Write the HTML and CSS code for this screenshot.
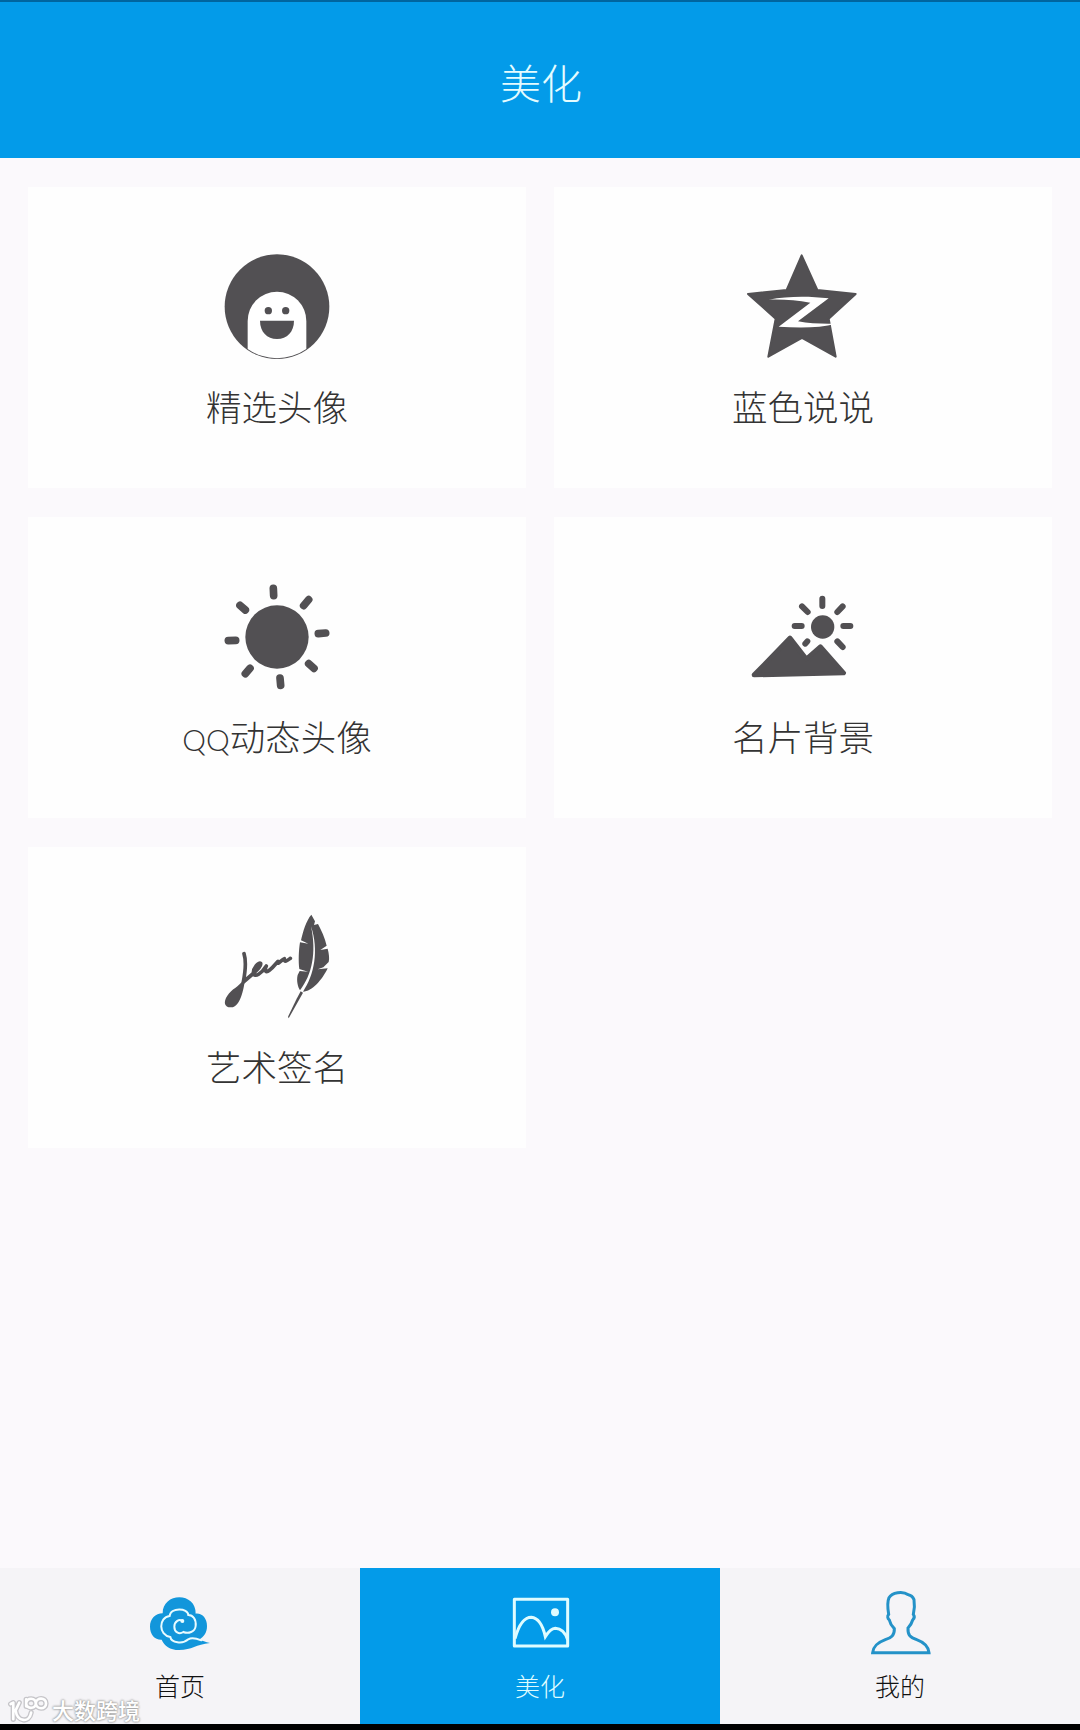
FILE: index.html
```html
<!DOCTYPE html>
<html lang="zh-CN">
<head>
    <meta charset="UTF-8">
    <meta name="viewport" content="width=device-width, initial-scale=1.0">
    <title>美化</title>
    <link rel="stylesheet" href="styles.css">
</head>
<body>
    <div class="app">
        <header class="header">
            <h1>美化</h1>
        </header>

        <main class="card-grid">
            <a class="card">
                <svg class="card-icon" viewBox="90 30 342 342">
                    <circle cx="261" cy="200" r="157" fill="#525053"/>
                    <path d="M173 327V243A88 88 0 0 1 349 243V327A154 154 0 0 1 173 327Z" fill="#fff"/>
                    <circle cx="235" cy="212" r="11" fill="#525053"/>
                    <circle cx="287" cy="212" r="11" fill="#525053"/>
                    <path d="M210 242H312C312 275 291 297 261 297S210 275 210 242Z" fill="#525053"/>
                </svg>
                <span class="card-label">精选头像</span>
            </a>
            <a class="card">
                <svg class="card-icon" viewBox="108 30 342 342">
                    <path d="M275 46L322 150L437 162L356 236L377 350L276 294L175 350L197 236L114 162L230 150Z" fill="#525053" stroke="#525053" stroke-width="6" stroke-linejoin="round"/>
                    <path d="M176 179C235 168 295 168 356 175L264 244C300 251 340 252 378 251C330 264 270 264 206 260L301 188C260 180 220 178 176 179Z" fill="#fff"/>
                </svg>
                <span class="card-label">蓝色说说</span>
            </a>
            <a class="card">
                <svg class="card-icon" viewBox="150 30 342 342">
                    <circle cx="321" cy="201" r="95" fill="#525053"/>
                    <path d="M310 55L311 77M416 89L401 107M445 191L467 189M416 281L432 295M330 324L332 346M240 295L226 311M197 211L175 212M226 120L210 106" fill="none" stroke="#525053" stroke-width="23" stroke-linecap="round"/>
                </svg>
                <span class="card-label"><span class="latin">QQ</span>动态头像</span>
            </a>
            <a class="card">
                <svg class="card-icon" viewBox="108 30 342 342">
                    <path d="M132 315L240 204L289 267L331 230L401 309Z" fill="#525053" stroke="#525053" stroke-width="14" stroke-linejoin="round"/>
                    <circle cx="338" cy="171" r="35" fill="#525053"/>
                    <path d="M337 86V108M276 109L293 126M398 109L382 126M254 168H275M400 168H421M382 214L398 231M292 214L286 221" fill="none" stroke="#525053" stroke-width="18" stroke-linecap="round"/>
                </svg>
                <span class="card-label">名片背景</span>
            </a>
            <a class="card">
                <svg class="card-icon" viewBox="90 30 342 342">
                    <path d="M162 161C168 180 166 215 160 246L188 222C201 210 214 199 212 190C206 185 190 205 190 218C193 236 216 219 229 198C222 214 228 219 239 210C250 202 258 190 264 184C260 200 275 178 283 176C282 190 293 181 301 175" fill="none" stroke="#525053" stroke-width="11" stroke-linecap="round" stroke-linejoin="round"/>
                    <path d="M165 239C161 267 151 321 124 322C103 323 99 306 112 287C124 267 147 260 160 239Z" fill="#525053"/>
                    <path d="M364 44L375 64L372 75L384 72C394 91 405 114 410 137L391 150L413 146C417 162 419 176 416 186L400 202L383 208L413 205C397 239 366 275 339 275C373 225 387 151 363 79C380 159 366 224 330 271C323 260 319 241 323 225L329 213L354 215L328 207C325 184 326 151 330 127L355 131L333 121C339 94 349 61 364 44Z" fill="#525053"/>
                    <path d="M332 274L339 278L296 355L294 350L320 296Z" fill="#525053"/>
                </svg>
                <span class="card-label">艺术签名</span>
            </a>
        </main>

        <nav class="tab-bar">
            <a class="tab">
                <svg class="tab-icon" viewBox="435 84 210 210">
                    <path d="M488 160C488 129 512 112 538 112S588 130 587 161C607 159 621 176 621 198C621 218 612 230 597 239C607 242 616 245 630 249C587 253 577 270 537 270C510 270 493 258 485 239C465 240 450 224 450 200C450 177 466 160 488 160Z" fill="#1296db"/>
                    <path d="M549 184C538 174 523 185 523 200C523 216 537 225 550 216C565 222 585 216 587 198C589 178 579 165 565 165C564 143 511 142 509 168C475 173 475 225 511 231C514 248 547 254 565 238C575 232 588 235 604 241" fill="none" stroke="#e8fbff" stroke-width="6" stroke-linecap="round"/>
                    <circle cx="547" cy="183" r="6" fill="#e8fbff"/>
                </svg>
                <span class="tab-label">首页</span>
            </a>
            <a class="tab active">
                <svg class="tab-icon" viewBox="195 84 210 210">
                    <rect x="223" y="118" width="160" height="140" fill="none" stroke="#dffcff" stroke-width="9" stroke-linejoin="round"/>
                    <path d="M225 236C236 196 252 172 274 172C296 174 309 199 316 230C326 214 334 206 346 205C365 206 376 218 383 239" fill="none" stroke="#dffcff" stroke-width="9"/>
                    <circle cx="345" cy="157" r="12" fill="#dffcff"/>
                </svg>
                <span class="tab-label">美化</span>
            </a>
            <a class="tab">
                <svg class="tab-icon" viewBox="495 84 210 210">
                    <path d="M518 278H687C685 257 672 247 650 239C630 232 623 225 624 204C633 195 636 187 638 180C643 175 644 168 640 163C644 147 644 132 642 119C638 109 632 105 625 104C608 92 576 97 567 113C561 127 563 145 566 163C561 168 563 175 568 180C570 190 575 198 583 206C584 226 574 233 556 239C532 248 520 258 518 278Z" fill="none" stroke="#2492c8" stroke-width="9"/>
                </svg>
                <span class="tab-label">我的</span>
            </a>
        </nav>

        <div class="watermark">
            <svg class="watermark-logo" viewBox="20 400 130 90">
                <g fill="none" stroke-linecap="round" stroke-linejoin="round">
                    <path d="M31 430L39 426V476M57 426L46 449C51 484 87 489 93 456M78 437V416M78 426C82 410 105 410 107 427S82 447 78 430M107 427C109 409 138 409 138 428S109 448 107 428" stroke="#c6c5c9" stroke-width="16"/>
                    <path d="M31 430L39 426V476M57 426L46 449C51 484 87 489 93 456M78 437V416M78 426C82 410 105 410 107 427S82 447 78 430M107 427C109 409 138 409 138 428S109 448 107 428" stroke="#fff" stroke-width="8"/>
                </g>
            </svg>
            <span>大数跨境</span>
        </div>
    </div>
</body>
</html>
```
FILE: styles.css
```css
* {
    margin: 0;
    padding: 0;
    box-sizing: border-box;
}

body {
    font-family: "Noto Sans CJK SC", sans-serif;
    font-weight: 300;
    background: #fbf9fc;
    color: #333;
}

.app {
    position: relative;
    display: flex;
    flex-direction: column;
    height: 1730px;
    border-bottom: 6px solid #000;
}

.header {
    display: flex;
    align-items: center;
    justify-content: center;
    height: 158px;
    padding: 2px 0 0 2px;
    border-top: 2px solid #00659f;
    background: #039be9;
}

.header h1 {
    font-size: 41px;
    line-height: 50px;
    font-weight: 300;
    color: #e4fcff;
}

.card-grid {
    flex: 1;
    display: grid;
    grid-template-columns: 1fr 1fr;
    grid-auto-rows: 301px;
    align-content: start;
    gap: 29px 28px;
    padding: 29px 28px 0;
}

.card {
    display: flex;
    flex-direction: column;
    align-items: center;
    padding-top: 63px;
    background: #fefefe;
}

.card-icon {
    width: 114px;
    height: 114px;
    margin-bottom: 22px;
}

.card-label {
    font-size: 35.5px;
    line-height: 40px;
}

.latin {
    font-family: Lato, sans-serif;
    font-size: 30px;
}

.tab-bar {
    display: grid;
    grid-template-columns: repeat(3, 1fr);
    height: 156px;
    background: #f5f4f7;
}

.tab {
    display: flex;
    flex-direction: column;
    align-items: center;
    padding-top: 20px;
    color: #111;
}

.tab.active {
    background: #039be9;
    color: #dffcff;
}

.tab-icon {
    width: 70px;
    height: 70px;
    margin-bottom: 12px;
}

.tab-label {
    font-size: 25px;
    line-height: 30px;
}

.watermark {
    position: absolute;
    left: 7px;
    bottom: 0;
    display: flex;
    align-items: center;
    gap: 2px;
    height: 30px;
    font-size: 22px;
    line-height: 30px;
    font-weight: 500;
    color: #fff;
    text-shadow: 0 0 2px #999, 0 0 2px #aaa, 0 0 3px #bbb;
}

.watermark-logo {
    width: 43px;
    height: 30px;
}
```
